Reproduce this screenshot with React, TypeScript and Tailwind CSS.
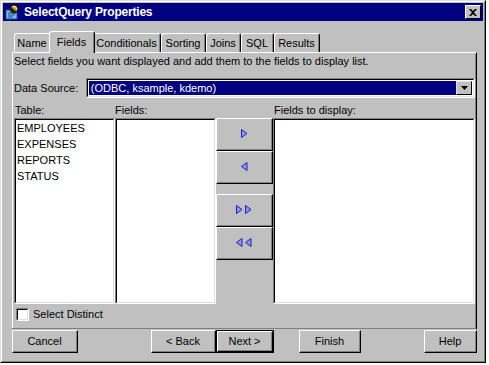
import React from "react";

const font = { fontFamily: '"Liberation Sans", Arial, sans-serif' };

function Btn({ label, w, isDefault }: { label: string; w: number; isDefault?: boolean }) {
  return (
    <div
      className={`h-[23px] flex ${isDefault ? "border border-black" : ""}`}
      style={{ width: w }}
    >
      <div className="flex-1 border-t border-l border-white border-r border-b border-r-black border-b-black">
        <div className="h-full flex items-center justify-center border-r border-b border-[#808080] text-[11px] text-black">
          {label}
        </div>
      </div>
    </div>
  );
}

function Arrow({ dir, double }: { dir: "r" | "l"; double?: boolean }) {
  const tri = (x: number) =>
    dir === "r" ? (
      <path d={`M${x} 0.5 L${x + 5.5} 4.5 L${x} 8.5 Z`} fill="#8c96ff" stroke="#2020b0" strokeWidth="1" />
    ) : (
      <path d={`M${x + 5.5} 0.5 L${x} 4.5 L${x + 5.5} 8.5 Z`} fill="#8c96ff" stroke="#2020b0" strokeWidth="1" />
    );
  return (
    <svg width={double ? 16 : 7} height={10} viewBox={`0 0 ${double ? 16 : 7} 10`}>
      {tri(0.5)}
      {double && tri(9.5)}
    </svg>
  );
}

function MoveBtn({ dir, double }: { dir: "r" | "l"; double?: boolean }) {
  return (
    <div className="h-[33px] w-full border-t border-l border-white border-r border-b border-r-black border-b-black">
      <div className="h-full flex items-center justify-center border-r border-b border-[#808080]">
        <Arrow dir={dir} double={double} />
      </div>
    </div>
  );
}

function ListBox({ w, items }: { w: number; items?: string[] }) {
  return (
    <div
      className="h-[186px] border-t border-l border-[#808080] border-r border-b border-r-white border-b-white"
      style={{ width: w }}
    >
      <div className="h-full bg-white border-t border-l border-black border-r border-b border-r-[#dfdfdf] border-b-[#dfdfdf] pl-[1px]">
        {items?.map((t) => (
          <div key={t} className="h-[16px] leading-[16px] text-[11px] text-black">
            {t}
          </div>
        ))}
      </div>
    </div>
  );
}

function Tab({ label, w, active }: { label: string; w: number; active?: boolean }) {
  return (
    <div
      className={`relative flex items-center justify-center bg-[#c0c0c0] text-[11px] text-black border-t border-l border-white border-r border-r-black rounded-t-[3px] ${
        active ? "h-[22px] z-10 -mb-[1px] -mx-[2px]" : "h-[19px]"
      }`}
      style={{ width: active ? w + 4 : w }}
    >
      <div className="h-full w-full flex items-center justify-center border-r border-[#808080]">{label}</div>
    </div>
  );
}

export default function App() {
  return (
    <div className="w-[489px] h-[365px] bg-white" style={font}>
      <div className="w-[486px] h-[363px] border-t border-l border-[#dfdfdf] border-r border-b border-r-black border-b-black">
        <div className="h-full border-t border-l border-white border-r border-b border-r-[#808080] border-b-[#808080] bg-[#c0c0c0] p-[1px]">
          {/* title bar */}
          <div className="h-[18px] bg-[#000080] flex items-center pl-[2px] pr-[2px]">
            <svg width="16" height="16" viewBox="0 0 16 16">
              <rect x="1" y="6" width="11" height="9" fill="#7fc0e8" stroke="#1a4d8f" />
              <path d="M3 9h7M3 11h7M3 13h5" stroke="#1a4d8f" />
              <circle cx="9" cy="5" r="4" fill="#c8a020" stroke="#000" />
              <path d="M6 3 L12 8 L10 10 L5 6 Z" fill="#222" />
              <path d="M8 2 q3 0 4 3" stroke="#fff" fill="none" />
            </svg>
            <span className="ml-[3px] text-white font-bold text-[12px] tracking-[-0.2px] leading-none">
              SelectQuery Properties
            </span>
            <div className="ml-auto w-[16px] h-[14px] bg-[#c0c0c0] border-t border-l border-white border-r border-b border-r-black border-b-black flex items-center justify-center">
              <svg width="8" height="7" viewBox="0 0 8 7">
                <path d="M0 0 L2 0 L4 2 L6 0 L8 0 L5 3.5 L8 7 L6 7 L4 5 L2 7 L0 7 L3 3.5 Z" fill="#000" />
              </svg>
            </div>
          </div>

          {/* tabs */}
          <div className="ml-[9px] mt-[9px] flex items-end h-[22px]">
            <div className="w-[2px]" />
            <Tab label="Name" w={37} />
            <Tab label="Fields" w={42} active />
            <Tab label="Conditionals" w={68} />
            <Tab label="Sorting" w={45} />
            <Tab label="Joins" w={35} />
            <Tab label="SQL" w={33} />
            <Tab label="Results" w={46} />
          </div>

          {/* panel */}
          <div className="ml-[9px] w-[465px] h-[277px] border-t border-l border-white border-r border-b border-r-black border-b-black">
            <div className="h-full border-r border-b border-[#808080] pl-[1px] text-[11px] text-black">
              <div className="mt-[1px] h-[14px] leading-[14px]">
                Select fields you want displayed and add them to the fields to display list.
              </div>
              <div className="mt-[10px] flex items-center h-[20px]">
                <span className="w-[72px]">Data Source:</span>
                <div className="w-[390px] h-[20px] border-t border-l border-[#808080] border-r border-b border-r-white border-b-white">
                  <div className="h-full border-t border-l border-black border-r border-b border-r-[#dfdfdf] border-b-[#dfdfdf] bg-white flex items-center p-[1px]">
                    <div className="flex-1 h-full bg-[#000080] text-white flex items-center pl-[2px]">(ODBC, ksample, kdemo)</div>
                    <div className="w-[16px] h-full bg-[#c0c0c0] border-t border-l border-[#dfdfdf] border-r border-b border-r-black border-b-black flex items-center justify-center">
                      <svg width="7" height="4" viewBox="0 0 7 4">
                        <path d="M0 0 H7 L3.5 4 Z" fill="#000" />
                      </svg>
                    </div>
                  </div>
                </div>
              </div>
              <div className="mt-[5px] flex h-[14px] leading-[14px]">
                <span className="w-[101px] pl-[1px]">Table:</span>
                <span className="w-[159px]">Fields:</span>
                <span>Fields to display:</span>
              </div>
              <div className="mt-[1px] flex">
                <ListBox w={101} items={["EMPLOYEES", "EXPENSES", "REPORTS", "STATUS"]} />
                <ListBox w={101} />
                <div className="w-[57px] flex flex-col">
                  <MoveBtn dir="r" />
                  <MoveBtn dir="l" />
                  <div className="h-[10px]" />
                  <MoveBtn dir="r" double />
                  <MoveBtn dir="l" double />
                </div>
                <ListBox w={202} />
              </div>
              <div className="mt-[3px] flex items-center h-[14px]">
                <div className="ml-[2px] w-[13px] h-[13px] border-t border-l border-[#808080] border-r border-b border-r-white border-b-white">
                  <div className="h-full bg-white border-t border-l border-black border-r border-b border-r-[#dfdfdf] border-b-[#dfdfdf]" />
                </div>
                <span className="ml-[4px]">Select Distinct</span>
              </div>
            </div>
          </div>

          {/* buttons */}
          <div className="ml-[9px] mt-[1px] flex">
            <Btn label="Cancel" w={66} />
            <div className="w-[73px]" />
            <Btn label="< Back" w={65} />
            <Btn label="Next >" w={58} isDefault />
            <div className="w-[25px]" />
            <Btn label="Finish" w={62} />
            <div className="w-[63px]" />
            <Btn label="Help" w={53} />
          </div>
        </div>
      </div>
    </div>
  );
}
